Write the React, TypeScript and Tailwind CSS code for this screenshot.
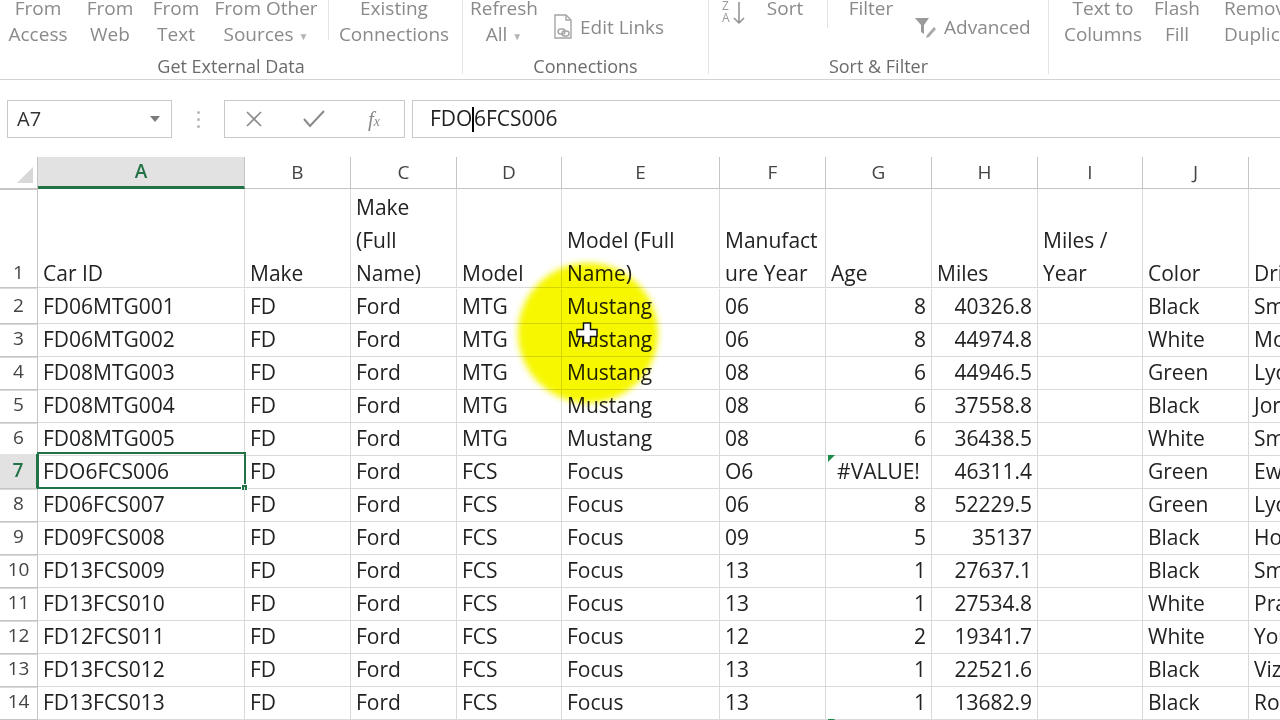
import React from "react";

type Row = {
  n: number;
  id: string;
  model: string;
  full: string;
  year: string;
  age: string;
  miles: string;
  color: string;
  driver: string;
};

const rows: Row[] = [
  { n: 2, id: "FD06MTG001", model: "MTG", full: "Mustang", year: "06", age: "8", miles: "40326.8", color: "Black", driver: "Smith" },
  { n: 3, id: "FD06MTG002", model: "MTG", full: "Mustang", year: "06", age: "8", miles: "44974.8", color: "White", driver: "Moore" },
  { n: 4, id: "FD08MTG003", model: "MTG", full: "Mustang", year: "08", age: "6", miles: "44946.5", color: "Green", driver: "Lyons" },
  { n: 5, id: "FD08MTG004", model: "MTG", full: "Mustang", year: "08", age: "6", miles: "37558.8", color: "Black", driver: "Jordan" },
  { n: 6, id: "FD08MTG005", model: "MTG", full: "Mustang", year: "08", age: "6", miles: "36438.5", color: "White", driver: "Smith" },
  { n: 7, id: "FDO6FCS006", model: "FCS", full: "Focus", year: "O6", age: "#VALUE!", miles: "46311.4", color: "Green", driver: "Ewing" },
  { n: 8, id: "FD06FCS007", model: "FCS", full: "Focus", year: "06", age: "8", miles: "52229.5", color: "Green", driver: "Lyons" },
  { n: 9, id: "FD09FCS008", model: "FCS", full: "Focus", year: "09", age: "5", miles: "35137", color: "Black", driver: "Holmes" },
  { n: 10, id: "FD13FCS009", model: "FCS", full: "Focus", year: "13", age: "1", miles: "27637.1", color: "Black", driver: "Smith" },
  { n: 11, id: "FD13FCS010", model: "FCS", full: "Focus", year: "13", age: "1", miles: "27534.8", color: "White", driver: "Pratt" },
  { n: 12, id: "FD12FCS011", model: "FCS", full: "Focus", year: "12", age: "2", miles: "19341.7", color: "White", driver: "Young" },
  { n: 13, id: "FD13FCS012", model: "FCS", full: "Focus", year: "13", age: "1", miles: "22521.6", color: "Black", driver: "Vizquel" },
  { n: 14, id: "FD13FCS013", model: "FCS", full: "Focus", year: "13", age: "1", miles: "13682.9", color: "Black", driver: "Ross" },
  { n: 15, id: "FD14FCS014", model: "FCS", full: "Focus", year: "14", age: "0", miles: "9012.4", color: "White", driver: "Smith" },
];

const GRID =
  "grid grid-cols-[38px_207px_106px_106px_105px_158px_106px_106px_106px_105px_106px_140px]";

const letters = ["A", "B", "C", "D", "E", "F", "G", "H", "I", "J", "K"];

function BigButton({
  w,
  top,
  bottom,
  caret,
}: {
  w: string;
  top: string;
  bottom: string;
  caret?: boolean;
}) {
  return (
    <div className={`flex shrink-0 flex-col items-center whitespace-nowrap ${w}`}>
      <span>{top}</span>
      <span>
        {bottom}
        {caret && <span className="ml-[5px] align-middle text-[10px] text-[#b5b5b5]">▼</span>}
      </span>
    </div>
  );
}

function Group({ w, label, children }: { w: string; label: string; children: React.ReactNode }) {
  return (
    <div className={`flex h-[74px] shrink-0 flex-col border-r border-[#e3e3e3] ${w}`}>
      <div className="-mt-[5px] flex h-[60px] shrink-0 items-start">{children}</div>
      <div className="shrink-0 text-center text-[18px] leading-[22px] text-[#6b6b6b]">{label}</div>
    </div>
  );
}

function Ribbon() {
  return (
    <div className="flex h-[80px] overflow-hidden border-b border-[#d2d2d2] bg-white text-[19px] leading-[26px] text-[#8a8a8a] shadow-[0_1px_2px_rgba(0,0,0,0.06)]">
      <Group w="w-[463px]" label="Get External Data">
        <BigButton w="w-[76px]" top="From" bottom="Access" />
        <BigButton w="w-[68px]" top="From" bottom="Web" />
        <BigButton w="w-[64px]" top="From" bottom="Text" />
        <BigButton w="w-[116px]" top="From Other" bottom="Sources" caret />
        <div className="ml-[4px] mt-[5px] h-[40px] w-px bg-[#e3e3e3]" />
        <BigButton w="w-[124px] ml-[3px]" top="Existing" bottom="Connections" />
      </Group>
      <Group w="w-[246px]" label="Connections">
        <BigButton w="w-[82px]" top="Refresh" bottom="All" caret />
        <div className="ml-[8px] flex flex-col">
          <div className="h-[5px] w-[18px] border-b-2 border-[#c9c9c9]" />
          <div className="mt-[14px] flex items-center gap-[7px]">
            <svg width="20" height="26" viewBox="0 0 20 26" fill="none" stroke="#a5a5a5" strokeWidth="1.4">
              <path d="M2 1h11l5 5v18H2z" />
              <path d="M13 1v5h5" />
              <rect x="5" y="15" width="7" height="5" rx="2.5" />
              <rect x="9" y="17" width="7" height="5" rx="2.5" />
            </svg>
            <span>Edit Links</span>
          </div>
        </div>
      </Group>
      <Group w="w-[340px]" label="Sort & Filter">
        <div className="ml-[13px] mt-[5px] flex w-[28px] shrink-0 items-start">
          <div className="flex flex-col text-[12px] leading-[12px] text-[#9a9a9a]">
            <span>Z</span>
            <span>A</span>
          </div>
          <svg width="14" height="26" viewBox="0 0 14 26" fill="none" stroke="#8f8f8f" strokeWidth="1.5" className="ml-[2px]">
            <path d="M7 2v21M2 18l5 5 5-5" />
          </svg>
        </div>
        <BigButton w="w-[50px] ml-[10px]" top="Sort" bottom="" />
        <div className="ml-[17px] mt-[5px] h-[28px] w-px shrink-0 bg-[#e3e3e3]" />
        <BigButton w="w-[52px] ml-[17px]" top="Filter" bottom="" />
        <div className="ml-[17px] flex flex-col">
          <div className="ml-[8px] h-[5px] w-[22px] border-b-2 border-[#c9c9c9]" />
          <div className="mt-[14px] flex items-center gap-[6px]">
            <svg width="24" height="24" viewBox="0 0 24 24">
              <path d="M1 3h14l-5 7v9l-3 -2v-7z" fill="#9a9a9a" />
              <path d="M13 20l7-8 2 2-7 8-3 1z" fill="#a8a8a8" />
            </svg>
            <span>Advanced</span>
          </div>
        </div>
      </Group>
      <div className="flex h-[74px] shrink-0 flex-col">
        <div className="-mt-[5px] flex h-[60px] items-start">
          <BigButton w="w-[76px] ml-[16px]" top="Text to" bottom="Columns" />
          <BigButton w="w-[54px] ml-[9px]" top="Flash" bottom="Fill" />
          <BigButton w="w-[120px] ml-[20px] items-start" top="Remove" bottom="Duplicates" />
        </div>
      </div>
    </div>
  );
}

function FormulaBar() {
  return (
    <div className="flex h-[77px] items-start bg-white pt-[20px]">
      <div className="ml-[7px] flex h-[38px] w-[165px] items-center justify-between border border-[#c9c9c9] pl-[9px] pr-[11px] text-[20px] text-[#333]">
        <span>A7</span>
        <svg width="10" height="6" viewBox="0 0 10 6">
          <path d="M0 0h10L5 6z" fill="#7b7b7b" />
        </svg>
      </div>
      <div className="flex h-[38px] w-[52px] flex-col items-center justify-center gap-[4px]">
        <span className="h-[3px] w-[3px] rounded-full bg-[#b9b9b9]" />
        <span className="h-[3px] w-[3px] rounded-full bg-[#b9b9b9]" />
        <span className="h-[3px] w-[3px] rounded-full bg-[#b9b9b9]" />
      </div>
      <div className="flex h-[38px] w-[181px] items-center gap-[20px] border border-[#c9c9c9] pl-[9px]">
        <div className="flex w-[40px] justify-center">
          <svg width="18" height="18" viewBox="0 0 18 18" fill="none" stroke="#8a8a8a" strokeWidth="1.6">
            <path d="M2 2l14 14M16 2L2 16" />
          </svg>
        </div>
        <div className="flex w-[40px] justify-center">
          <svg width="22" height="18" viewBox="0 0 22 18" fill="none" stroke="#8a8a8a" strokeWidth="2">
            <path d="M1 9l6 7L21 1" />
          </svg>
        </div>
        <div className="flex w-[40px] justify-center font-['Liberation_Serif',serif] text-[21px] italic leading-none text-[#8a8a8a]">
          <span>
            f<span className="text-[14px]">x</span>
          </span>
        </div>
      </div>
      <div className="ml-[7px] flex h-[38px] flex-1 items-center border border-r-0 border-[#c9c9c9] pl-[17px] text-[21px] text-[#222]">
        <span>FDO</span>
        <span className="inline-block h-[25px] w-[1.5px] bg-black" />
        <span>6FCS006</span>
      </div>
    </div>
  );
}

const cell = "overflow-hidden whitespace-nowrap border-b border-r border-[#dadada] px-[5px] leading-[34px]";
const rowHead = "border-b border-r border-[#c5c5c5] text-center text-[19px] leading-[33px] text-[#444]";
const head = "overflow-hidden whitespace-nowrap border-b border-r border-[#dadada] px-[5px] flex flex-col justify-end leading-[33px]";

function HeadCell({ lines }: { lines: string[] }) {
  return (
    <div className={head}>
      {lines.map((l) => (
        <span key={l} className="relative top-[3px]">
          {l}
        </span>
      ))}
    </div>
  );
}

function Sheet() {
  return (
    <div className="relative overflow-hidden">
      {/* column headers */}
      <div className={`${GRID} h-[32px]`}>
        <div className="relative border-b border-r border-[#c5c5c5] bg-white">
          <svg width="16" height="16" viewBox="0 0 16 16" className="absolute bottom-[5px] right-[4px]">
            <path d="M16 0v16H0z" fill="#d8d8d8" />
          </svg>
        </div>
        {letters.map((l) =>
          l === "A" ? (
            <div
              key={l}
              className="border-b-[3px] border-r border-b-[#217346] border-r-[#c5c5c5] bg-[#e2e2e2] text-center text-[19px] font-semibold leading-[29px] text-[#217346]"
            >
              {l}
            </div>
          ) : (
            <div key={l} className="border-b border-r border-[#c5c5c5] bg-white text-center text-[19px] leading-[31px] text-[#444]">
              {l}
            </div>
          )
        )}
        <div className="border-b border-[#c5c5c5] bg-white" />
      </div>

      {/* header row */}
      <div className={`${GRID} h-[100px] text-[21px] text-[#222]`}>
        <div className={`${rowHead} flex items-end justify-center`}>
          <span className="relative top-[2px]">1</span>
        </div>
        <HeadCell lines={["Car ID"]} />
        <HeadCell lines={["Make"]} />
        <HeadCell lines={["Make", "(Full", "Name)"]} />
        <HeadCell lines={["Model"]} />
        <HeadCell lines={["Model (Full", "Name)"]} />
        <HeadCell lines={["Manufact", "ure Year"]} />
        <HeadCell lines={["Age"]} />
        <HeadCell lines={["Miles"]} />
        <HeadCell lines={["Miles /", "Year"]} />
        <HeadCell lines={["Color"]} />
        <HeadCell lines={["Driver"]} />
        <div className={cell} />
      </div>

      {rows.map((r) => {
        const sel = r.n === 7;
        const err = r.age === "#VALUE!";
        return (
          <div key={r.n} className={`${GRID} h-[33px] text-[21px] text-[#222]`}>
            {sel ? (
              <div className="border-b border-r-2 border-b-[#c5c5c5] border-r-[#217346] bg-[#e2e2e2] text-center text-[19px] font-semibold leading-[33px] text-[#217346]">
                {r.n}
              </div>
            ) : (
              <div className={rowHead}>{r.n}</div>
            )}
            <div className={`${cell} relative overflow-visible`}>
              {r.id}
              {sel && (
                <div className="absolute -left-[1px] -top-[2px] bottom-[-1px] right-[-2px] border-2 border-[#217346]">
                  <span className="absolute -bottom-[4px] -right-[4px] h-[7px] w-[7px] border border-white bg-[#217346]" />
                </div>
              )}
            </div>
            <div className={cell}>FD</div>
            <div className={cell}>Ford</div>
            <div className={cell}>{r.model}</div>
            <div className={cell}>{r.full}</div>
            <div className={cell}>{r.year}</div>
            <div className={`${cell} relative ${err ? "text-center" : "text-right"}`}>
              {r.age}
              {(err || r.n === 15) && (
                <svg width="7" height="7" viewBox="0 0 7 7" className="absolute left-[2px] top-[1px]">
                  <path d="M0 0h7L0 7z" fill="#1e8c4a" />
                </svg>
              )}
            </div>
            <div className={`${cell} text-right`}>{r.miles}</div>
            <div className={cell} />
            <div className={cell}>{r.color}</div>
            <div className={cell}>{r.driver}</div>
            <div className={cell} />
          </div>
        );
      })}

      {/* presenter's cursor highlight */}
      <div className="pointer-events-none absolute left-[518px] top-[106px] h-[140px] w-[140px] rounded-full bg-[#f7f700] mix-blend-multiply blur-[3px]" />
      <svg width="22" height="22" viewBox="0 0 22 22" className="pointer-events-none absolute left-[576px] top-[165px]">
        <path d="M7.5 1h7v6.5H21v7h-6.5V21h-7v-6.5H1v-7h6.5z" fill="#fff" stroke="#111" strokeWidth="1.5" />
      </svg>
    </div>
  );
}

export default function App() {
  return (
    <div className="h-[720px] w-[1280px] overflow-hidden bg-white font-['Open_Sans',sans-serif]">
      <Ribbon />
      <FormulaBar />
      <Sheet />
    </div>
  );
}
